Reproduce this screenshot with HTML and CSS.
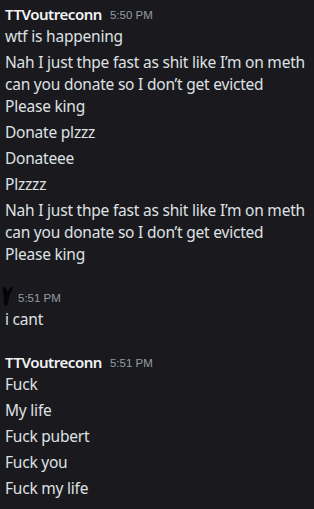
FILE: index.html
```html
<!DOCTYPE html>
<html>
<head>
<meta charset="utf-8">
<link rel="stylesheet" href="styles.css">
</head>
<body>
<div class="chat">
  <div class="group first">
    <div class="msg">
      <div class="header"><span class="name">TTVoutreconn</span><span class="time">5:50 PM</span></div>
      <div class="text">wtf is happening</div>
    </div>
    <div class="msg"><div class="text">Nah I just thpe fast as shit like I’m on meth<br>can you donate so I don’t get evicted<br>Please king</div></div>
    <div class="msg"><div class="text">Donate plzzz</div></div>
    <div class="msg"><div class="text">Donateee</div></div>
    <div class="msg"><div class="text">Plzzzz</div></div>
    <div class="msg"><div class="text">Nah I just thpe fast as shit like I’m on meth<br>can you donate so I don’t get evicted<br>Please king</div></div>
  </div>
  <div class="group">
    <div class="msg">
      <div class="header">
        <svg class="scribble" width="11" height="21" viewBox="0 0 11 21"><path d="M1 2 C2 0 4 1 4.5 3 L5.5 6 L9 1 C10 0 11 1 10.5 3 L7.5 9 L6.5 15 C6 19 4 21 2.5 19 C1.5 16 2 12 1.5 8 C1 6 0.5 4 1 2 Z" fill="#050505"/></svg><span class="time">5:51 PM</span>
      </div>
      <div class="text">i cant</div>
    </div>
  </div>
  <div class="group">
    <div class="msg">
      <div class="header"><span class="name">TTVoutreconn</span><span class="time">5:51 PM</span></div>
      <div class="text">Fuck</div>
    </div>
    <div class="msg"><div class="text">My life</div></div>
    <div class="msg"><div class="text">Fuck pubert</div></div>
    <div class="msg"><div class="text">Fuck you</div></div>
    <div class="msg"><div class="text">Fuck my life</div></div>
  </div>
</div>
</body>
</html>
```
FILE: styles.css
```css
html, body {
  margin: 0;
  padding: 0;
  background: #1a1a1e;
}
body {
  font-family: "Noto Sans", "Open Sans", sans-serif;
  width: 314px;
  height: 509px;
  overflow: hidden;
}
.chat {
  display: flex;
  flex-direction: column;
  padding-top: 1px;
}
.group {
  margin-top: 17px;
}
.group.first {
  margin-top: 0;
}
.msg {
  padding: 2px 0 2px 5px;
}
.header {
  display: flex;
  align-items: center;
  height: 22px;
}
.name {
  color: #f2f3f5;
  font-size: 15px;
  font-weight: 600;
  letter-spacing: -0.45px;
}
.time {
  color: #949ba4;
  font-family: "Liberation Sans", Arial, sans-serif;
  font-size: 11.5px;
  margin-left: 8px;
  padding-top: 2px;
}
.scribble {
  margin-left: -3px;
  margin-top: -2px;
}
.scribble + .time {
  margin-left: 5px;
}
.text {
  color: #dfe1e4;
  font-size: 15.5px;
  line-height: 22px;
  letter-spacing: -0.22px;
  white-space: nowrap;
}
```
